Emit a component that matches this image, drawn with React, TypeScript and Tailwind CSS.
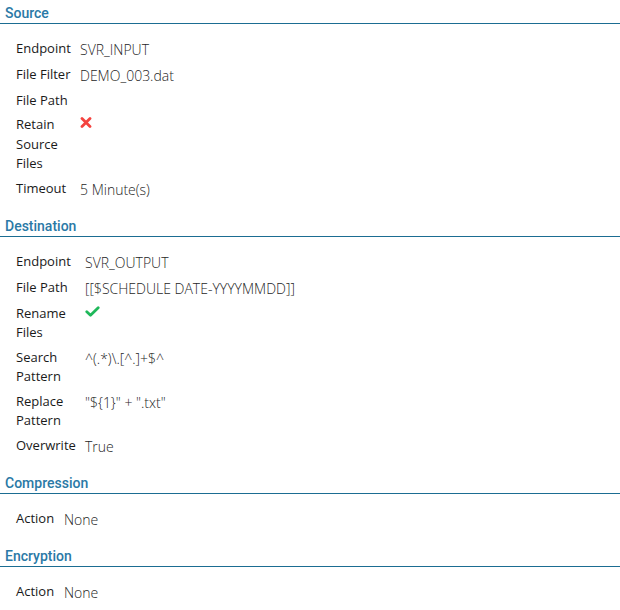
import React from "react";

type Row = { label: string; value?: React.ReactNode };

const Cross = () => (
  <svg width="12" height="11" viewBox="0 0 12 11" className="mt-[2px]">
    <path d="M2 1.5 L10 9.5 M10 1.5 L2 9.5" stroke="#f4433f" strokeWidth="2.8" strokeLinecap="round" />
  </svg>
);

const Check = () => (
  <svg width="15" height="11" viewBox="0 0 15 11" className="mt-[2px]">
    <path d="M1.8 5.8 L5.5 9.2 L13.2 1.8" stroke="#1fb85a" strokeWidth="2.8" fill="none" strokeLinecap="round" strokeLinejoin="round" />
  </svg>
);

const Section = ({ title, labelWidth, rows }: { title: string; labelWidth: string; rows: Row[] }) => (
  <div className="mb-[11px]">
    <div className="pl-[5px] pt-[3px] border-b-[1.5px] border-[#1b6d92] font-['Roboto',sans-serif] font-medium text-[14px] leading-5 text-[#2a79a6]">
      {title}
    </div>
    <div className="mt-[12px] pl-[16px]">
      {rows.map((r, i) => (
        <div key={i} className="flex items-start py-[2.5px] font-['Open_Sans',sans-serif]">
          <div className={`${labelWidth} shrink-0 pr-[8px] text-[13px] leading-[19.5px] text-[#1a1a1a]`}>{r.label}</div>
          <div className="text-[14px] leading-[21px] text-[#262626] font-light">{r.value}</div>
        </div>
      ))}
    </div>
  </div>
);

export default function App() {
  return (
    <div className="w-[620px] bg-white">
      <Section
        title="Source"
        labelWidth="w-[64px]"
        rows={[
          { label: "Endpoint", value: "SVR_INPUT" },
          { label: "File Filter", value: "DEMO_003.dat" },
          { label: "File Path" },
          { label: "Retain Source Files", value: <Cross /> },
          { label: "Timeout", value: "5 Minute(s)" },
        ]}
      />
      <Section
        title="Destination"
        labelWidth="w-[69px]"
        rows={[
          { label: "Endpoint", value: "SVR_OUTPUT" },
          { label: "File Path", value: "[[$SCHEDULE DATE-YYYYMMDD]]" },
          { label: "Rename Files", value: <Check /> },
          { label: "Search Pattern", value: "^(.*)\\.[^.]+$^" },
          { label: "Replace Pattern", value: "\"${1}\" + \".txt\"" },
          { label: "Overwrite", value: "True" },
        ]}
      />
      <Section title="Compression" labelWidth="w-[48px]" rows={[{ label: "Action", value: "None" }]} />
      <Section title="Encryption" labelWidth="w-[48px]" rows={[{ label: "Action", value: "None" }]} />
    </div>
  );
}
